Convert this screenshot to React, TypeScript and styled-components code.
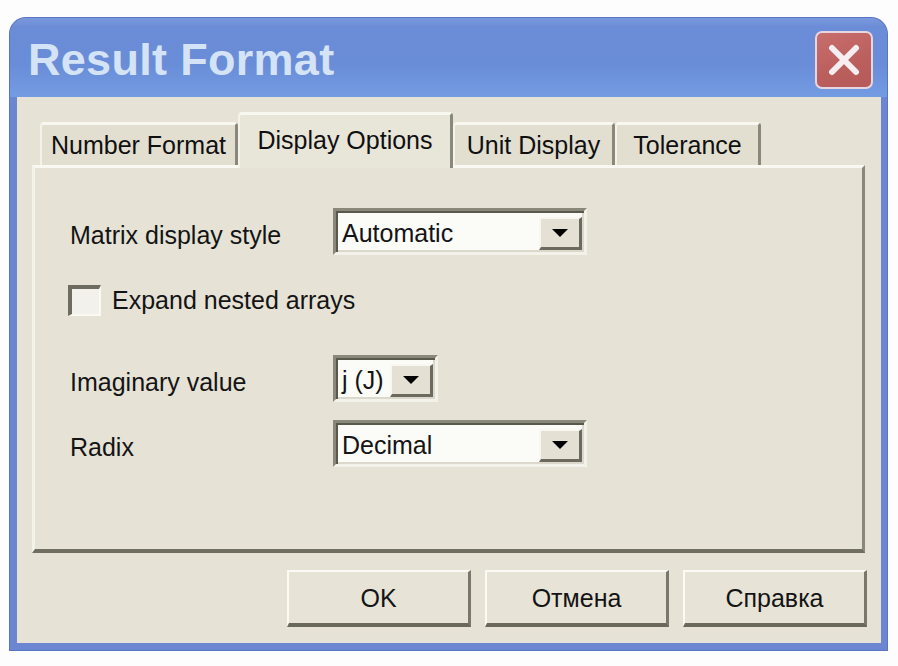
import styled, { createGlobalStyle } from 'styled-components'

const GlobalStyle = createGlobalStyle`
  html, body {
    margin: 0;
    padding: 0;
    background: #fdfdfd;
  }
  body {
    font-family: 'Liberation Sans', Arial, sans-serif;
  }
`

const tabs = [
  { label: 'Number Format', width: 198 },
  { label: 'Display Options', width: 215 },
  { label: 'Unit Display', width: 162 },
  { label: 'Tolerance', width: 146 },
]
const activeTab = 1

const Page = styled.div`
  width: 898px;
  height: 666px;
  padding: 18px 11px 16px 10px;
  box-sizing: border-box;
`

const Window = styled.div`
  width: 877px;
  height: 632px;
  display: flex;
  flex-direction: column;
  background: #6d86d2;
  border-radius: 16px 16px 0 0;
  padding: 0 6px 7px 7px;
  box-sizing: border-box;
  box-shadow: 0 0 0 1px #5b74c4;
`

const TitleBar = styled.div`
  height: 79px;
  margin: 0 -6px 0 -7px;
  padding: 0 14px 0 18px;
  display: flex;
  align-items: center;
  border-radius: 16px 16px 0 0;
  background: linear-gradient(180deg, #7a98dc 0%, #6b8cd6 12%, #6a8dd8 60%, #739ce2 100%);
`

const Title = styled.div`
  flex: 1;
  color: #d4e3f6;
  font-size: 45px;
  font-weight: bold;
  letter-spacing: 0.3px;
  margin-top: 4px;
`

const CloseButton = styled.div`
  width: 58px;
  height: 58px;
  margin-top: 4px;
  box-sizing: border-box;
  border: 2px solid #e6d6e2;
  border-radius: 7px;
  background: linear-gradient(160deg, #c86e6c 0%, #bb5f5d 60%, #b65a5a 100%);
  display: flex;
  align-items: center;
  justify-content: center;
`

const Body = styled.div`
  flex: 1;
  display: flex;
  flex-direction: column;
  background: #e6e3d6;
  padding: 15px 16px 0 15px;
`

const TabStrip = styled.div`
  display: flex;
  align-items: flex-end;
  height: 53px;
  padding-left: 8px;
  position: relative;
  z-index: 1;
`

const Tab = styled.div<{ $active?: boolean; $width: number }>`
  width: ${(p) => p.$width}px;
  height: ${(p) => (p.$active ? '56px' : '43px')};
  margin-bottom: ${(p) => (p.$active ? '-3px' : '0')};
  display: flex;
  justify-content: center;
  align-items: ${(p) => (p.$active ? 'flex-start' : 'center')};
  padding-top: ${(p) => (p.$active ? '11px' : '1px')};
  box-sizing: border-box;
  font-size: 25px;
  color: #101010;
  background: ${(p) => (p.$active ? '#e8e5d9' : '#e2dfd1')};
  border-top: 3px solid #f8f7f0;
  border-left: 2px solid #f4f3ea;
  border-right: 3px solid #8a887a;
  border-radius: 4px 4px 0 0;
  white-space: nowrap;
`

const Panel = styled.div`
  height: 388px;
  box-sizing: border-box;
  background: #e6e3d6;
  border-top: 3px solid #f9f8f2;
  border-left: 3px solid #f4f3ea;
  border-right: 3px solid #8a887a;
  border-bottom: 4px solid #706e60;
  padding: 40px 0 0 35px;
  display: flex;
  flex-direction: column;
`

const Row = styled.div<{ $gap: number; $height: number }>`
  display: flex;
  align-items: center;
  margin-top: ${(p) => p.$gap}px;
  height: ${(p) => p.$height}px;
`

const Label = styled.div`
  width: 263px;
  font-size: 25px;
  color: #141414;
  padding-top: 8px;
`

const Combo = styled.div<{ $width: number }>`
  width: ${(p) => p.$width}px;
  height: 47px;
  box-sizing: border-box;
  display: flex;
  align-items: stretch;
  background: #fbfbf8;
  border-top: 3px solid #8a887a;
  border-left: 3px solid #8a887a;
  border-right: 3px solid #f2f1ea;
  border-bottom: 3px solid #f2f1ea;
  box-shadow: inset 2px 2px 0 #5a584c, inset -2px -2px 0 #dcd9cc;
`

const ComboText = styled.div`
  flex: 1;
  display: flex;
  align-items: center;
  padding: 3px 0 0 6px;
  font-size: 25px;
  color: #141414;
  white-space: nowrap;
`

const DropButton = styled.div`
  width: 43px;
  margin: 6px 2px 2px 0;
  box-sizing: border-box;
  background: #e4e1d4;
  border-top: 2px solid #f8f7f2;
  border-left: 2px solid #f8f7f2;
  border-right: 3px solid #6c6a5e;
  border-bottom: 3px solid #6c6a5e;
  display: flex;
  align-items: center;
  justify-content: center;
`

const Arrow = styled.div`
  width: 0;
  height: 0;
  border-left: 8px solid transparent;
  border-right: 8px solid transparent;
  border-top: 8px solid #000;
`

const CheckRow = styled.label`
  display: flex;
  align-items: center;
  gap: 11px;
  font-size: 25px;
  color: #141414;
  margin-left: -2px;
`

const CheckBox = styled.div`
  width: 33px;
  height: 31px;
  box-sizing: border-box;
  background: #f2f1ec;
  border-top: 4px solid #6e6c60;
  border-left: 4px solid #6e6c60;
  border-right: 2px solid #faf9f4;
  border-bottom: 2px solid #faf9f4;
`

const Footer = styled.div`
  flex: 1;
  display: flex;
  justify-content: flex-end;
  align-items: flex-start;
  gap: 14px;
  padding: 17px 0 0 0;
  margin-right: -2px;
`

const Button = styled.div`
  width: 184px;
  height: 57px;
  box-sizing: border-box;
  background: #e7e4d7;
  border-top: 2px solid #fbfaf5;
  border-left: 2px solid #fbfaf5;
  border-right: 3px solid #7a786a;
  border-bottom: 4px solid #6a685a;
  display: flex;
  align-items: center;
  justify-content: center;
  font-size: 25px;
  color: #141414;
  padding-top: 2px;
`

const CloseIcon = () => (
  <svg width="36" height="36" viewBox="0 0 36 36">
    <path d="M6 6 L30 30 M30 6 L6 30" stroke="#f7eef2" strokeWidth="6" strokeLinecap="round" />
  </svg>
)

const Select = ({ value, width }: { value: string; width: number }) => (
  <Combo $width={width}>
    <ComboText>{value}</ComboText>
    <DropButton>
      <Arrow />
    </DropButton>
  </Combo>
)

export default function App() {
  return (
    <>
      <GlobalStyle />
      <Page>
        <Window>
          <TitleBar>
            <Title>Result Format</Title>
            <CloseButton>
              <CloseIcon />
            </CloseButton>
          </TitleBar>
          <Body>
            <TabStrip>
              {tabs.map((t, i) => (
                <Tab key={t.label} $width={t.width} $active={i === activeTab}>
                  {t.label}
                </Tab>
              ))}
            </TabStrip>
            <Panel>
              <Row $gap={0} $height={47}>
                <Label>Matrix display style</Label>
                <Select value="Automatic" width={254} />
              </Row>
              <Row $gap={30} $height={30}>
                <CheckRow>
                  <CheckBox />
                  Expand nested arrays
                </CheckRow>
              </Row>
              <Row $gap={40} $height={47}>
                <Label>Imaginary value</Label>
                <Select value="j (J)" width={105} />
              </Row>
              <Row $gap={18} $height={47}>
                <Label>Radix</Label>
                <Select value="Decimal" width={254} />
              </Row>
            </Panel>
            <Footer>
              <Button>OK</Button>
              <Button>Отмена</Button>
              <Button>Справка</Button>
            </Footer>
          </Body>
        </Window>
      </Page>
    </>
  )
}
